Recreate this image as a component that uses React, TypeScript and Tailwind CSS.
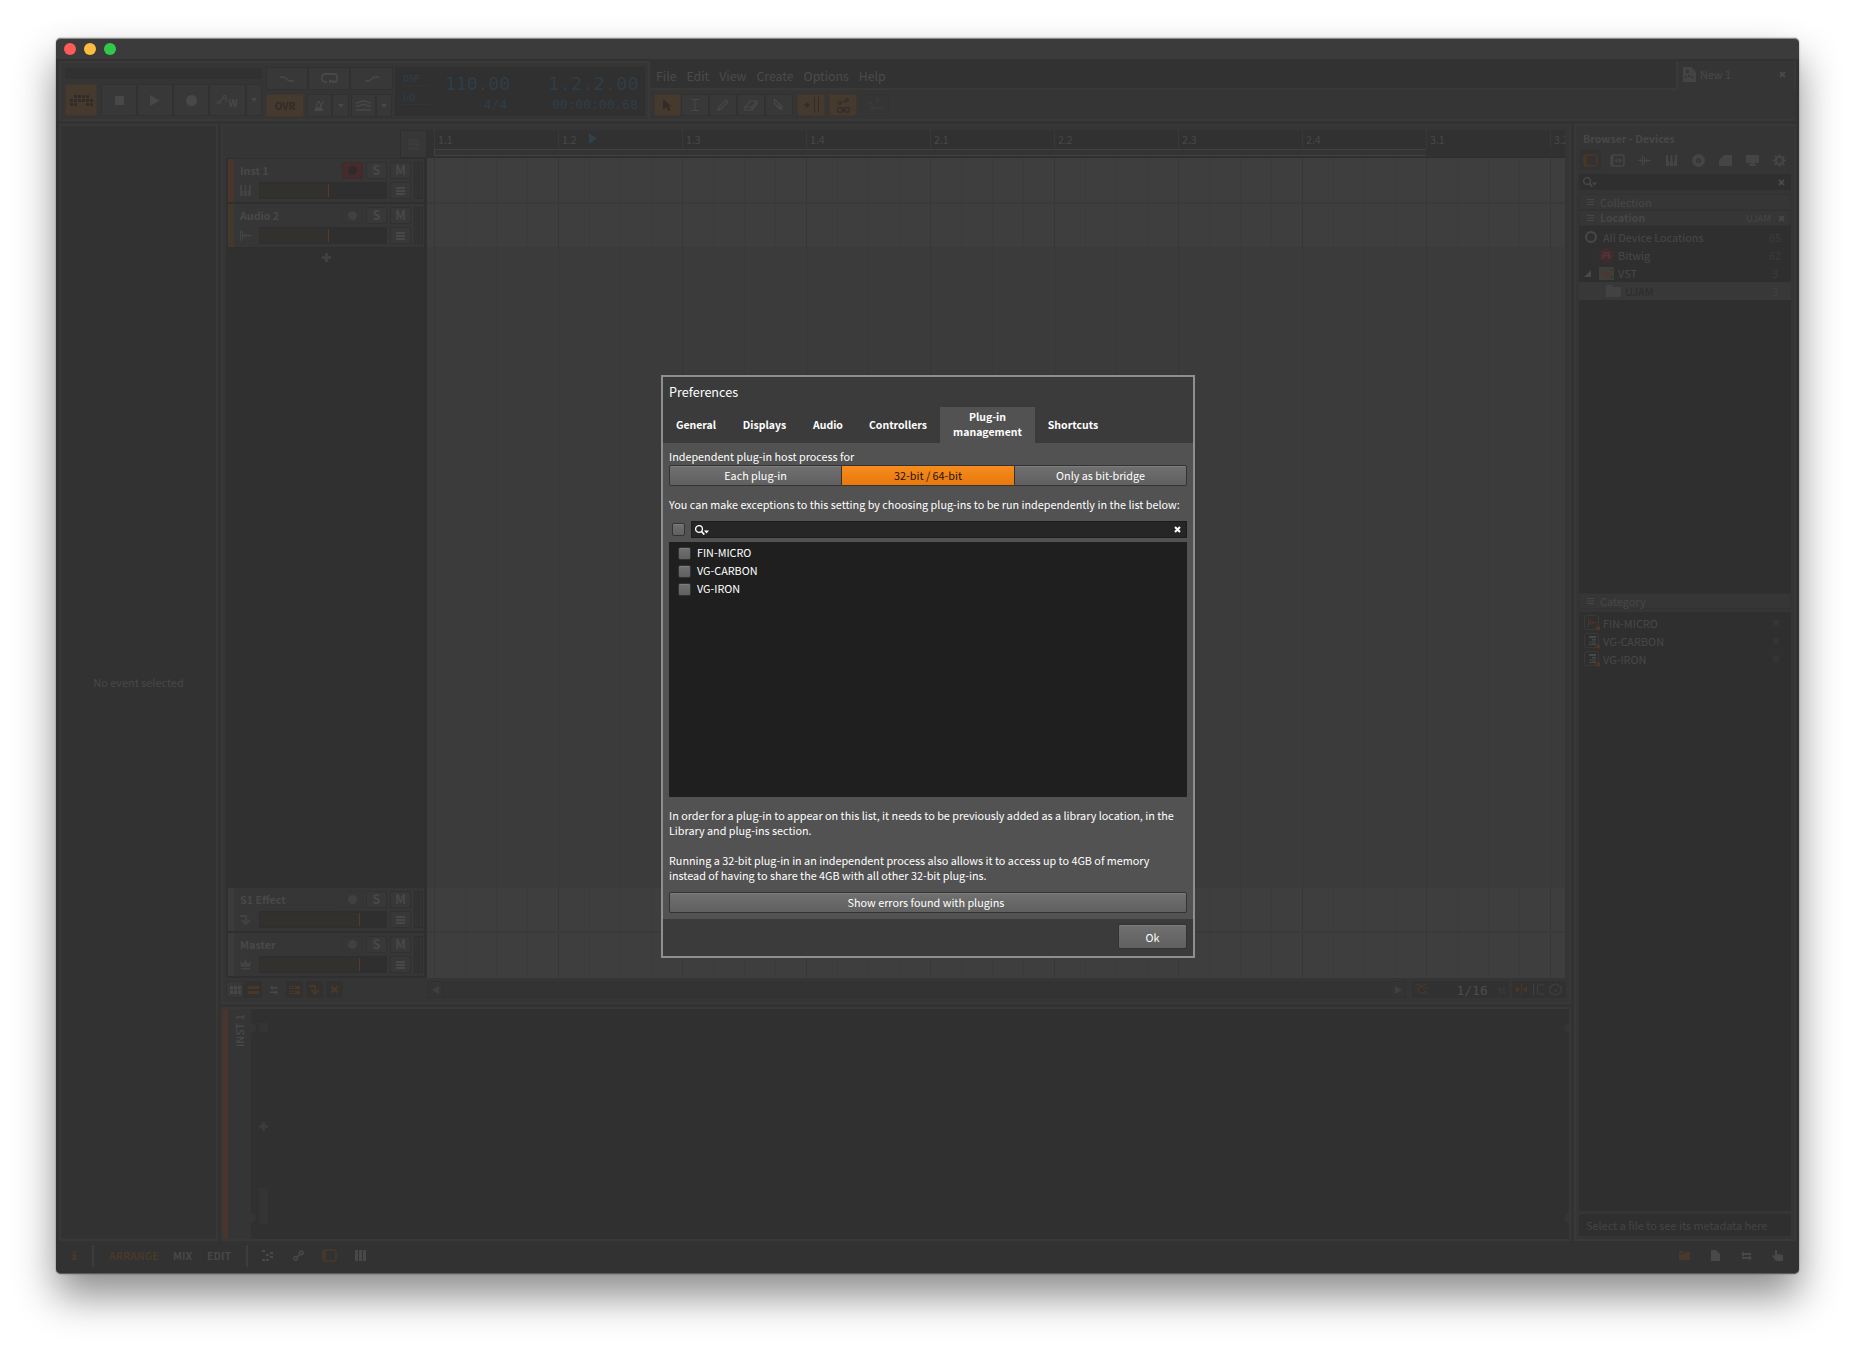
import type { ReactNode } from 'react';
import { clsx } from 'clsx';
import { twMerge } from 'tailwind-merge';

const BEATS = ['1.1', '1.2', '1.3', '1.4', '2.1', '2.2', '2.3', '2.4', '3.1', '3.2'];
const MENU = ['File', 'Edit', 'View', 'Create', 'Options', 'Help'];

interface IconProps {
  w: number;
  h: number;
  children: ReactNode;
  className?: string;
}

// filled icon on a pixel grid; strokes are opted into per shape
const Icon = ({ w, h, children, className }: IconProps) => (
  <svg width={w} height={h} viewBox={`0 0 ${w} ${h}`} fill="currentColor" className={clsx('block shrink-0', className)}>
    {children}
  </svg>
);

const line = { fill: 'none', stroke: 'currentColor', strokeWidth: 1.5 };

const CaretIcon = () => (
  <Icon w={6} h={4}><path d="M0 0h6L3 4z" /></Icon>
);

const CloseIcon = ({ size = 7 }: { size?: number }) => (
  <svg width={size} height={size} viewBox="0 0 7 7" className="block shrink-0">
    <path d="M1 1l5 5M6 1L1 6" stroke="currentColor" strokeWidth="2" />
  </svg>
);

const PlusIcon = () => (
  <Icon w={9} h={9}><path d="M3 0h3v3h3v3H6v3H3V6H0V3h3z" /></Icon>
);

const SearchIcon = () => (
  <Icon w={14} h={10}>
    <circle cx="4" cy="4" r="3.400" {...line} strokeWidth={1.300} />
    <path d="M6.500 6.500L9.300 9.500" {...line} strokeWidth={1.800} />
    <path d="M9 5.500h5L11.500 8.500z" />
  </Icon>
);

const RowsIcon = () => (
  <Icon w={9} h={8}><path d="M0 0h9v2H0zM0 3h9v2H0zM0 6h9v2H0z" /></Icon>
);

const ListIcon = () => (
  <Icon w={7} h={6}><path d="M0 0h7v1H0zM0 2.500h7v1H0zM0 5h7v1H0z" /></Icon>
);

const DotIcon = ({ size = 10 }: { size?: number }) => (
  <svg width={size} height={size} viewBox="0 0 10 10" className="block shrink-0"><circle cx="5" cy="5" r="5" fill="currentColor" /></svg>
);

const KeysIcon = () => (
  <Icon w={11} h={11}><path d="M0 0h2v6h1v5H0zM4.600 0h1.800v6h.8v5H3.800V6h.8zM9 0h2v11H8V6h1z" /></Icon>
);

const WaveIcon = () => (
  <Icon w={13} h={11}>
    <path d="M.5 0v11M2.500 1v9M4.500 3v5M6.500 4v3M8.500 4.500v2M0 5.500h12" {...line} strokeWidth={1} />
  </Icon>
);

const EffectIcon = () => (
  <Icon w={11} h={10}>
    <path d="M0 1h6v7" {...line} strokeWidth={1.800} />
    <path d="M2 5l4 4 4-4" {...line} strokeWidth={1.800} />
  </Icon>
);

const CrownIcon = () => (
  <Icon w={11} h={11}><path d="M0 2l3 2.500L5.500 0 8 4.500 11 2l-1 6H1zM1 9h9v1.500H1z" /></Icon>
);

const SwapIcon = () => (
  <Icon w={11} h={10}><path d="M3 0v2h7v2H3v2L0 3zM8 4v2H1v2h7v2l3-3z" /></Icon>
);

const PanelIcon = () => (
  <Icon w={15} h={13}>
    <rect x="1" y="1" width="13" height="11" rx="2" {...line} />
    <path d="M1 1h3v11H1z" opacity=".8" />
  </Icon>
);

const BitwigIcon = () => (
  <Icon w={23} h={11}>
    {[4, 8, 12, 16].map((x) => <rect key={x} x={x} y={0} width={3} height={3} />)}
    {[0, 4, 8, 12, 16, 20].map((x) => <rect key={x} x={x} y={4} width={3} height={3} />)}
    {[0, 4, 16, 20].map((x) => <rect key={x} x={x} y={8} width={3} height={3} />)}
  </Icon>
);

const AutomationIcon = () => (
  <Icon w={11} h={10}>
    <circle cx="2" cy="7.500" r="1.500" {...line} strokeWidth={1.200} />
    <circle cx="7.500" cy="2" r="1.500" {...line} strokeWidth={1.200} />
    <path d="M3 6.500l3.500-3.500M8.500 3l1 4" {...line} strokeWidth={1.200} />
  </Icon>
);

interface CellProps {
  children?: ReactNode;
  className?: string;
  on?: boolean;
}

const Cell = ({ children, className, on }: CellProps) => (
  <div
    className={twMerge(
      'flex shrink-0 items-center justify-center rounded-[2px] border',
      on ? 'border-[#40352c] bg-[#46392e] text-[#312c28]' : 'border-[#313131] bg-[#383838] text-[#484848]',
      className,
    )}
  >
    {children}
  </div>
);

const Toolbar = () => (
  <div className="flex h-[60px]">
    <div className="flex w-[591px] border-2 border-[#393939] bg-[#353535] pl-1">
      <div className="flex w-[197px] flex-col pt-[5px]">
        <div className="h-[11px] bg-[#313131]" />
        <div className="mt-[5px] flex h-[32px]">
          <Cell on className="mr-1 w-[32px]"><BitwigIcon /></Cell>
          <Cell className="w-[36px]"><div className="h-[9px] w-[9px] bg-[#484848]" /></Cell>
          <Cell className="w-[36px]"><Icon w={10} h={11}><path d="M0 0l10 5.500L0 11z" /></Icon></Cell>
          <Cell className="w-[36px]"><DotIcon size={11} /></Cell>
          <Cell className="w-[37px]">
            <AutomationIcon />
            <span className="mt-[6px] text-[10px] leading-none font-bold">W</span>
          </Cell>
          <Cell className="w-[16px]"><CaretIcon /></Cell>
        </div>
      </div>
      <div className="ml-1 flex w-[127px] flex-col gap-1 pt-1">
        <div className="flex h-[23px]">
          <Cell className="w-[42px]"><Icon w={14} h={6}><path d="M0 1h3c3 0 4 4 7 4h4" {...line} /></Icon></Cell>
          <Cell className="w-[42px]">
            <Icon w={17} h={11}>
              <path d="M6 9H4a3 3 0 01-3-3V4a3 3 0 013-3h9a3 3 0 013 3v2a3 3 0 01-3 3h-2" {...line} strokeWidth={1.800} />
              <path d="M8 11l5-4H8z" />
            </Icon>
          </Cell>
          <Cell className="w-[43px]"><Icon w={14} h={6}><path d="M0 5h3c3 0 4-4 7-4h4" {...line} /></Icon></Cell>
        </div>
        <div className="flex h-[23px]">
          <Cell on className="w-[38px] text-[10px] font-bold">OVR</Cell>
          <Cell className="ml-[3px] w-[25px]">
            <Icon w={11} h={11}>
              <path d="M1 10.500L4 1.500h1.500l3 9z" {...line} strokeWidth={1.200} />
              <path d="M2 7.500h5.500l1.500 3.500H1zM4.500 8L9.500 .5l1 .7L6 8z" />
            </Icon>
          </Cell>
          <Cell className="w-[17px]"><CaretIcon /></Cell>
          <Cell className="ml-[2px] w-[25px]">
            <Icon w={15} h={11}><path d="M0 3c4 0 4-2 7.500-2S11 3 15 3M0 6.500c4 0 4-2 7.500-2s3.500 2 7.500 2M0 10h15" {...line} /></Icon>
          </Cell>
          <Cell className="w-[16px]"><CaretIcon /></Cell>
        </div>
      </div>
      <div className="mt-1 ml-[2px] flex h-[49px] w-[250px] bg-[#303030] font-['DejaVu_Sans_Mono',monospace] text-[#2f3e48]">
        <div className="w-[34px] pt-1 pl-2 font-['Noto_Sans_CJK_SC',sans-serif] text-[8.500px] leading-[14px] font-medium">
          <div className="mb-1 w-[26px] border-b border-[#303539]">DSP</div>
          <div className="w-[26px] border-b border-[#303539]">I/O</div>
        </div>
        <div className="flex w-[81px] flex-col items-end pt-[5px]">
          <span className="text-[18px] leading-[24px]">110.00</span>
          <span className="pr-[3px] text-[13px] leading-[17px]">4/4</span>
        </div>
        <div className="flex w-[129px] flex-col items-end pt-[5px]">
          <span className="text-[18px] leading-[24px] tracking-[0.500px]">1.2.2.00</span>
          <span className="pr-px text-[13px] leading-[17px]">00:00:00.68</span>
        </div>
      </div>
    </div>
    <div className="flex flex-1 flex-col border-b-2 border-[#393939] bg-[#353535]">
      <div className="flex h-[29px]">
        <div className="flex w-[1026px] items-center gap-[10px] border-b-2 border-[#393939] bg-[#323232] pt-[3px] pl-[6px] text-[12.300px] text-[#4b4b4b]">
          {MENU.map((item) => <span key={item}>{item}</span>)}
        </div>
        <div className="flex flex-1 items-center border-x-2 border-[#393939] pr-[8px] pb-[2px] pl-[5px] text-[#494949]">
          <Icon w={13} h={15}>
            <path d="M0 0h8l5 5v10H0z" opacity=".8" />
            <path d="M3 3h3v3H3zM2 9h2v2H2zM5 8h2v2H5zM8 9h2v2H8z" fill="#353535" />
          </Icon>
          <span className="ml-1 flex-1 text-[10.800px]">New 1</span>
          <CloseIcon />
        </div>
      </div>
      <div className="mt-1 flex h-[22px] pl-1">
        <Cell on className="w-[27px]"><Icon w={9} h={12}><path d="M0 0l8.500 7.500H5.500L7.500 11l-2 1L3.500 8 0 10.500z" /></Icon></Cell>
        <Cell className="w-[28px]"><Icon w={8} h={12}><path d="M0 .5h8M0 11.500h8M4 .5v11" {...line} strokeWidth={1} /></Icon></Cell>
        <Cell className="w-[28px]"><Icon w={12} h={12}><path d="M1 11l1-3 7-7 2 2-7 7z" {...line} strokeWidth={1.200} /></Icon></Cell>
        <Cell className="w-[28px]"><Icon w={14} h={12}><path d="M1 8l5-6h7L8 8zM1 8v3h7l5-6V2M8 8v3" {...line} strokeWidth={1.200} /></Icon></Cell>
        <Cell className="w-[28px]"><Icon w={10} h={12}><path d="M.5 .5v4l5.500 6 2.500-2.500z" {...line} strokeWidth={1.200} /><path d="M3 4l6 7-3-.5z" /></Icon></Cell>
        <Cell on className="ml-1 w-[28px]">
          <Icon w={16} h={16}>
            <path d="M0 7.500h3V5l4 3-4 3V8.500H0z" />
            <path d="M11.500 0v16M15.500 0v16" {...line} strokeWidth={1} />
          </Icon>
        </Cell>
        <Cell on className="ml-1 w-[28px]">
          <Icon w={13} h={15}>
            <circle cx="2.500" cy="5" r="1.500" {...line} strokeWidth={1} />
            <circle cx="10" cy="2" r="1.500" {...line} strokeWidth={1} />
            <path d="M4 4.500l1.500-1.500 1.500 1.500L8.500 3M4 12h5" {...line} strokeWidth={1} />
            <rect x=".6" y="9.600" width="5" height="4.500" rx="1" {...line} strokeWidth={1.200} />
            <rect x="7.400" y="9.600" width="5" height="4.500" rx="1" {...line} strokeWidth={1.200} />
          </Icon>
        </Cell>
        <Cell className="ml-1 w-[28px] opacity-30"><Icon w={16} h={12}><path d="M3 9l4-3v2h9v2H7v2zM1 3h4v2H1zM9 0h3v3H9z" /></Icon></Cell>
      </div>
    </div>
  </div>
);

interface Track {
  name: string;
  strip: string;
  icon: ReactNode;
  armed?: boolean;
  level: string;
}

const TRACKS: Track[] = [
  { name: 'Inst 1', strip: 'bg-[#49352b]', icon: <KeysIcon />, armed: true, level: 'w-[69px]' },
  { name: 'Audio 2', strip: 'bg-[#41392c]', icon: <WaveIcon />, level: 'w-[69px]' },
];
const MASTERS: Track[] = [
  { name: 'S1 Effect', strip: 'bg-[#3b3b3b]', icon: <EffectIcon />, level: 'w-[100px]' },
  { name: 'Master', strip: 'bg-[#3b3b3b]', icon: <CrownIcon />, level: 'w-[100px]' },
];

const TrackHeader = ({ track }: { track: Track }) => (
  <div className="flex h-[45px] border-b-2 border-[#2f2f2f] bg-[#363636]">
    <div className={clsx('w-[6px]', track.strip)} />
    <div className="flex w-[177px] flex-col pt-[3px] pl-[6px]">
      <div className="flex h-[17px] items-center">
        <span className="flex-1 text-[10.700px] leading-[17px] font-bold text-[#494949]">{track.name}</span>
        <Cell className={clsx('h-[17px] w-[21px]', track.armed ? 'border-[#3a2c2c] bg-[#452b2b] text-[#302a2a]' : 'border-[#343434] bg-[#363636] text-[#414141]')}>
          <DotIcon size={9} />
        </Cell>
        <Cell className="ml-[3px] h-[17px] w-[21px] text-[12.500px] leading-none font-bold">S</Cell>
        <Cell className="ml-[3px] h-[17px] w-[21px] text-[12.500px] leading-none font-bold">M</Cell>
      </div>
      <div className="mt-[3px] flex h-[17px] items-center text-[#434343]">
        <div className="w-[19px]">{track.icon}</div>
        <div className="flex h-[17px] w-[128px] bg-[#2f2f2f] p-px py-[2px]">
          <div className={clsx('border-r border-[#573a2a] bg-[#33312d]', track.level)} />
        </div>
        <Cell className="ml-[3px] h-[17px] w-[21px]"><RowsIcon /></Cell>
      </div>
    </div>
    <div className="my-[3px] ml-[3px] flex w-[9px] border border-[#2f2f2f] bg-[#333]">
      <div className="w-[4px] border-r border-[#2f2f2f]" />
    </div>
  </div>
);

const GridRow = ({ className, dense }: { className: string; dense?: boolean }) => (
  <div className={clsx('flex w-[1138px] shrink-0 overflow-hidden', className)}>
    <div className="w-[7px] shrink-0" />
    {BEATS.map((beat) => (
      <div key={beat} className="flex w-[124px] shrink-0 border-l border-[#373737]">
        {[0, 1, 2].map((i) => (
          <div key={i} className={clsx('w-[31px] border-r', dense ? 'border-[#3b3b3b]' : i === 1 ? 'border-[#393939]' : 'border-transparent')} />
        ))}
      </div>
    ))}
  </div>
);

const Ruler = () => (
  <div className="flex h-[28px] w-[1138px] overflow-hidden border-b border-[#2e2e2e] bg-[#313131] pl-[7px]">
    {BEATS.map((beat, i) => (
      <div key={beat} className="flex w-[124px] shrink-0 flex-col">
        <div className="flex h-[19px] border-l border-[#383838] pt-px pl-[3px] text-[10.600px] leading-[17px] text-[#484848]">
          {beat}
          {i === 1 && <Icon w={8} h={11} className="mt-[2px] ml-[12px] text-[#2f414b]"><path d="M0 0l8 5.500L0 11z" /></Icon>}
        </div>
        <div className={clsx('h-[7px] border-[#414141]', i < 8 && 'border-y bg-[#343434]', i === 0 && 'border-l')} />
      </div>
    ))}
  </div>
);

const ArrangeFooter = () => (
  <div className="mt-[3px] flex h-[17px] items-center text-[#4a4a4a]">
    <Cell className="h-[17px] w-[18px]"><Icon w={11} h={8}><path d="M0 0h3v3.500H0zM4 0h3v3.500H4zM8 0h3v3.500H8zM0 4.500h3V8H0zM4 4.500h3V8H4zM8 4.500h3V8H8z" /></Icon></Cell>
    <Cell className="h-[17px] w-[18px] bg-[#313131] text-[#4a3726]"><Icon w={11} h={8}><path d="M0 0h11v3H0zM0 5h11v3H0z" /></Icon></Cell>
    <Cell className="ml-1 h-[17px] w-[16px] border-transparent bg-transparent"><Icon w={8} h={10}><path d="M2.500 0v2H8v1.500H2.500v2L0 2.700zM5.500 4.500v2H0V8h5.500v2L8 7.200z" /></Icon></Cell>
    <Cell className="ml-1 h-[17px] w-[17px] bg-[#313131] text-[#4a3726]"><Icon w={11} h={8}><path d="M0 0h5v1H0zM0 2h5v1H0zM0 5h5v1H0zM0 7h5v1H0zM6 0h5v3H6zM6 5h5v3H6z" /></Icon></Cell>
    <Cell className="ml-[3px] h-[17px] w-[17px] bg-[#313131] text-[#4a3726]"><EffectIcon /></Cell>
    <Cell className="ml-[3px] h-[17px] w-[17px] bg-[#313131] text-[#4a3726]"><CloseIcon size={9} /></Cell>
    <Cell className="ml-[84px] h-[17px] w-[16px] bg-[#343434] text-[#404040]"><Icon w={7} h={8}><path d="M7 0v8L0 4z" /></Icon></Cell>
    <div className="h-[17px] flex-1 border border-[#323232] bg-[#333]" />
    <Cell className="h-[17px] w-[16px] bg-[#343434] text-[#404040]"><Icon w={7} h={8}><path d="M0 0v8l7-4z" /></Icon></Cell>
    <div className="ml-[6px] flex h-[17px] w-[97px] items-center bg-[#313131] pr-[3px] pl-[3px]">
      <Icon w={13} h={12} className="text-[#4a3726]">
        <rect x=".5" y=".5" width="5" height="3.500" rx="1.500" {...line} strokeWidth={1} />
        <rect x="7" y=".5" width="5" height="3.500" rx="1.500" {...line} strokeWidth={1} />
        <path d="M3 4.500a4 4 0 007 3l2 3.500M4 2.500h4" {...line} />
      </Icon>
      <span className="ml-auto pt-[2px] font-['DejaVu_Sans_Mono',monospace] text-[13px] leading-none text-[#4d4d4d]">1/16</span>
      <span className="ml-[10px] text-[10px] leading-none text-[#3c3c3c]">st</span>
    </div>
    <div className="mr-[3px] ml-[3px] flex h-[17px] w-[54px] items-center justify-between bg-[#313131] px-1 text-[#404040]">
      <Icon w={11} h={11} className="text-[#4a3726]"><path d="M0 2l4 3.500L0 9zM11 2L7 5.500 11 9zM5 0h1v11H5z" /></Icon>
      <Icon w={11} h={11}><path d="M.5 0v11M11 1H4.500v9H11" {...line} strokeWidth={1} /></Icon>
      <Icon w={13} h={13}><path d="M6.500 .8l5.500 2.700v6L6.500 12.200 1 9.500v-6zM6.500 6v3" {...line} strokeWidth={1.200} /></Icon>
    </div>
  </div>
);

const Arranger = () => (
  <div className="h-[880px] border-2 border-[#383838] bg-[#353535] pt-1 pl-[3px]">
    <div className="flex h-[28px]">
      <div className="flex w-[201px] justify-end">
        <div className="flex w-[27px] items-center justify-center border border-[#2f2f2f] bg-[#373737] text-[#3b3b3b]">
          <Icon w={11} h={13}><path d="M0 1h11v3H0zM0 5h11v3H0zM0 9h11v3H0z" /></Icon>
        </div>
      </div>
      <Ruler />
    </div>
    <div className="flex h-[820px]">
      <div className="flex w-[201px] flex-col overflow-hidden border border-r-[3px] border-b-0 border-[#2f2f2f] bg-[#303030] pl-px">
        {TRACKS.map((track) => <TrackHeader key={track.name} track={track} />)}
        <div className="flex flex-1 justify-center pt-[4px] pl-px text-[#3f3f3f]"><PlusIcon /></div>
        {MASTERS.map((track) => <TrackHeader key={track.name} track={track} />)}
      </div>
      <div className="flex w-[1138px] flex-col">
        <GridRow dense className="h-[46px] border-b-2 border-[#3a3a3a] bg-[#3e3e3e]" />
        <GridRow dense className="h-[43px] bg-[#3e3e3e]" />
        <GridRow className="h-[641px] bg-[#3b3b3b]" />
        <GridRow dense className="h-[45px] border-b-2 border-[#3a3a3a] bg-[#3e3e3e]" />
        <GridRow dense className="h-[45px] bg-[#3e3e3e]" />
      </div>
    </div>
    <ArrangeFooter />
  </div>
);

const DevicePanel = () => (
  <div className="flex h-[234px] border-2 border-[#383838] bg-[#303030]">
    <div className="w-[5px] bg-[#49352b]" />
    <div className="flex w-[23px] justify-center bg-[#353535] pt-[2px] pr-[2px]">
      <span className="h-[36px] rotate-180 text-[10.800px] leading-[20px] font-medium whitespace-nowrap text-[#494949] [writing-mode:vertical-rl]">INST 1</span>
    </div>
    <div className="flex flex-1 justify-between overflow-hidden">
      <div className="-ml-[5px] flex flex-col justify-between pt-[14px] pb-[16px] text-[#353535]">
        <DotIcon />
        <DotIcon />
      </div>
      <div className="mr-auto ml-[3px] flex w-[9px] flex-col pt-[14px] text-[#3b3b3b]">
        <div className="h-[9px] w-[9px] bg-[#343434]" />
        <div className="mt-[90px]"><PlusIcon /></div>
        <div className="mt-[57px] h-[36px] w-[9px] bg-[#343434]" />
      </div>
      <div className="-mr-[5px] flex flex-col justify-between pt-[14px] pb-[16px] text-[#353535]">
        <DotIcon />
        <DotIcon />
      </div>
    </div>
  </div>
);

const BROWSER_TABS: ReactNode[] = [
  <span className="text-[#4a3726]"><PanelIcon /></span>,
  <Icon w={15} h={13}><rect x="1" y="1" width="13" height="11" rx="2" {...line} /><path d="M1 1h2.500v11H1zM7.500 4v5L4.500 6.500zM9 4v5l3-2.500z" /></Icon>,
  <Icon w={13} h={11}><path d="M0 5.500h13M2.500 4v3M4.500 0v11M6.500 2v7M8.500 3.500v4M10.500 4.500v2" {...line} strokeWidth={1} /></Icon>,
  <KeysIcon />,
  <Icon w={13} h={13}><path fillRule="evenodd" d="M6.500 0a6.500 6.500 0 110 13 6.500 6.500 0 010-13zm0 4a2.500 2.500 0 100 5 2.500 2.500 0 000-5z" /><circle cx="6.500" cy="6.500" r="1" /></Icon>,
  <Icon w={13} h={11}><path d="M5 0h8v11H0V5z" /></Icon>,
  <Icon w={13} h={11}><path d="M0 0h13v8H0zM5 8h3v1h2v2H3V9h2z" /></Icon>,
  <Icon w={13} h={13}>
    <circle cx="6.500" cy="6.500" r="3.600" {...line} strokeWidth={2.400} />
    <path d="M6.500 0v2.500M6.500 10.500V13M0 6.500h2.500M10.500 6.500H13M1.900 1.900l1.800 1.800M9.300 9.300l1.800 1.800M11.100 1.900L9.300 3.700M3.700 9.300l-1.800 1.800" {...line} strokeWidth={2} />
  </Icon>,
];

const LOCATIONS = [
  {
    name: 'All Device Locations', count: 65, pad: 'pl-[6px]', selected: false,
    icon: <Icon w={12} h={12}><circle cx="6" cy="6" r="5" {...line} strokeWidth={2} /></Icon>,
  },
  {
    name: 'Bitwig', count: 62, pad: 'pl-[20px]', selected: false,
    icon: (
      <Icon w={15} h={15}>
        <circle cx="7.500" cy="7.500" r="7.500" fill="#432b2d" />
        <path d="M4.500 5h6M3 7.500h9M3 9.500h3M9 9.500h3" stroke="#524042" strokeWidth="1.500" strokeDasharray="1 .5" />
      </Icon>
    ),
  },
  {
    name: 'VST', count: 3, pad: 'pl-[5px]', selected: false,
    icon: (
      <>
        <Icon w={7} h={7} className="mr-2"><path d="M7 0v7H0z" /></Icon>
        <Icon w={15} h={13}>
          <path d="M0 0h15v13H0z" fill="#3e4038" />
          <path d="M1 6.500h2l3-2.500h3v5H6L3 6.500M9 5.500h2M9 7.500h2" stroke="#4b3632" fill="#4b3632" />
          <path d="M12 2h2v2h-2zM12 9h2v2h-2z" fill="#35372f" />
        </Icon>
      </>
    ),
  },
  {
    name: 'UJAM', count: 3, pad: 'pl-[27px]', selected: true,
    icon: <Icon w={15} h={12} className="text-[#424242]"><path d="M0 0h6l1.500 2H15v10H0z" /></Icon>,
  },
];

const PLUGINS = ['FIN-MICRO', 'VG-CARBON', 'VG-IRON'];

const SectionHead = ({ name, bold, filter }: { name: string; bold?: boolean; filter?: string }) => (
  <div className="flex h-4 items-center border border-[#323232] bg-[#363636] pr-[5px] pl-[7px] text-[#474747]">
    <ListIcon />
    <span className={clsx('ml-[6px] flex-1 leading-4', bold ? 'text-[10.600px] font-bold' : 'text-[10.900px]')}>{name}</span>
    {filter && <span className="mr-[7px] text-[9.500px] leading-4">{filter}</span>}
    {filter && <CloseIcon />}
  </div>
);

const Browser = () => (
  <div className="flex w-[222px] flex-col border-2 border-[#393939] bg-[#353535] px-[3px] pb-[3px]">
    <div className="mt-[5px] ml-1 text-[10.600px] leading-[16px] font-bold text-[#484848]">Browser - Devices</div>
    <div className="mt-[3px] flex h-[20px] items-center pl-px text-[#454545]">
      {BROWSER_TABS.map((tab, i) => (
        <div key={i} className={clsx('flex h-[20px] w-[21px] shrink-0 items-center justify-center', i > 0 ? 'ml-[6px]' : 'bg-[#323232]')}>{tab}</div>
      ))}
    </div>
    <div className="mt-[4px] flex h-[16px] items-center justify-between bg-[#2f2f2f] pr-[6px] pl-1 text-[#494949]">
      <SearchIcon />
      <CloseIcon />
    </div>
    <div className="mt-1"><SectionHead name="Collection" /></div>
    <SectionHead name="Location" bold filter="UJAM" />
    <div className="h-[367px] bg-[#2f2f2f] pt-[2px] text-[10.900px] leading-[18px] text-[#484848]">
      {LOCATIONS.map(({ name, count, pad, selected, icon }) => (
        <div key={name} className={clsx('flex h-[18px] items-center pr-[10px]', pad, selected && 'bg-[#383838]')}>
          {icon}
          <span className={clsx('flex-1', name === 'All Device Locations' ? 'ml-[6px]' : 'ml-1', selected && 'text-[#2c2c2c]')}>{name}</span>
          <span className={clsx(selected ? 'text-[#424242]' : 'text-[#3b3b3b]', count < 10 && 'pr-[3px]')}>{count}</span>
        </div>
      ))}
    </div>
    <SectionHead name="Category" />
    <div className="mt-[3px] flex-1 bg-[#2f2f2f] pt-[2px] text-[10.900px] text-[#484848]">
      {PLUGINS.map((name, i) => (
        <div key={name} className="flex h-[18px] items-center pr-[10px] pl-[5px]">
          <Icon w={17} h={16}>
            <rect x=".5" y=".5" width="14" height="14" rx="2" {...line} strokeWidth={1} opacity=".4" />
            {i === 0
              ? <path d="M4.500 3v9M6.500 5v5M8.500 6v3M4 7.500h9" stroke="#4b332b" />
              : <path d="M5 3h7v2H5zM8 6h4v1.500H8zM5 8.500h7v1H5zM8 10.500h4V12H5v-1h3z" />}
            <path d="M8 13.500h3l2-2h3v4h-3l-2-2" fill="#4f352a" />
          </Icon>
          <span className="ml-[2px] flex-1 leading-[18px]">{name}</span>
          <Icon w={10} h={10} className="mb-[2px] text-[#38362f]"><path d="M5 0l1.200 3.700H10L7 6l1.100 4L5 7.600 1.900 10 3 6 0 3.700h3.800z" /></Icon>
        </div>
      ))}
    </div>
    <div className="mt-[3px] flex h-[22px] items-center bg-[#2f2f2f] pl-[7px] text-[10.900px] text-[#444]">Select a file to see its metadata here</div>
  </div>
);

const Footer = () => (
  <div className="flex h-[31px] items-center pb-[2px] text-[10.500px] font-bold text-[#484848]">
    <Icon w={5} h={9} className="ml-[13px] text-[#4a3828]"><path d="M1.500 0h2v2h-2zM0 3h3.700v4.500H5V9H0V7.500h1.200v-3H0z" /></Icon>
    <div className="ml-[15px] h-[22px] w-[2px] bg-[#3d3d3d]" />
    <span className="ml-[15px] w-[64px] text-[#4a3828]">ARRANGE</span>
    <span className="w-[34px]">MIX</span>
    <span className="w-[39px]">EDIT</span>
    <div className="h-[22px] w-[2px] bg-[#3d3d3d]" />
    <Icon w={11} h={11} className="ml-[14px]"><path d="M0 0h3v2H0zM4 4h3v2H4zM8 2h3v2H8zM8 6h3v2H8zM0 9h3v2H0zM4 9h3v2H4z" /></Icon>
    <Icon w={11} h={11} className="ml-[20px]">
      <circle cx="2.700" cy="8.300" r="1.800" {...line} />
      <circle cx="8.300" cy="2.700" r="1.800" {...line} />
      <path d="M4 7l3-3" {...line} />
    </Icon>
    <span className="ml-[18px] text-[#4a3828]"><PanelIcon /></span>
    <Icon w={11} h={11} className="mr-auto ml-[18px]"><path d="M0 0h3v11H0zM4 0h3v11H4zM8 0h3v11H8z" /></Icon>
    <Icon w={11} h={9} className="text-[#483a2b]"><path d="M0 0h4v2H0zM5 1h6v8H0V3h5z" /></Icon>
    <Icon w={9} h={11} className="ml-[21px]"><path d="M0 0h5l4 4v7H0z" /></Icon>
    <span className="ml-[21px]"><SwapIcon /></span>
    <Icon w={11} h={11} className="mr-[13px] ml-[20px]"><path d="M3 0h2v4l6 1v6H4L0 6l1-1 2 1z" /></Icon>
  </div>
);

const DIALOG_TABS = [
  { name: 'General', width: 'w-[66px]' },
  { name: 'Displays', width: 'w-[71px]' },
  { name: 'Audio', width: 'w-[56px]' },
  { name: 'Controllers', width: 'w-[84px]' },
  { name: 'Plug-in management', width: 'w-[95px]' },
  { name: 'Shortcuts', width: 'w-[76px]' },
];

const RAISED = 'border border-[#333] bg-linear-to-b from-[#707070] to-[#606060] shadow-[inset_0_1px_0_#7d7d7d]';

const Checkbox = () => <div className={clsx('h-[13px] w-[13px] shrink-0 rounded-[2px]', RAISED)} />;

const PreferencesDialog = () => (
  <div className="absolute top-[337px] left-[605px] flex h-[583px] w-[534px] flex-col border-2 border-[#8f8f8f] bg-[#525252] text-[10.800px] leading-[15px] whitespace-nowrap text-white">
    <div className="h-[66px] bg-[#3b3b3b]">
      <div className="h-[30px] pt-[5px] pl-[6px] text-[12.600px] leading-[20px]">Preferences</div>
      <div className="flex h-[36px] text-[10.500px] font-bold">
        {DIALOG_TABS.map(({ name, width }, i) => (
          <div key={name} className={clsx('flex items-center justify-center pb-[2px] text-center whitespace-normal', width, i === 4 && 'bg-[#525252]')}>
            {name}
          </div>
        ))}
      </div>
    </div>
    <div className="px-[6px]">
      <div className="mt-[6px] h-[16px]">Independent plug-in host process for</div>
      <div className="flex h-[21px] w-[518px] text-center leading-[19px]">
        <div className={clsx('w-[173px] rounded-l-[2px]', RAISED)}>Each plug-in</div>
        <div className="w-[172px] border-y border-[#333] bg-linear-to-b from-[#f78b1c] to-[#e87a0c] text-[#1d1208]">32-bit / 64-bit</div>
        <div className={clsx('w-[173px] rounded-r-[2px]', RAISED)}>Only as bit-bridge</div>
      </div>
      <div className="mt-[11px] h-[15px]">
        You can make exceptions to this setting by choosing plug-ins to be run independently in the list below:
      </div>
      <div className="mt-[9px] flex h-[17px] w-[518px] items-center pl-[3px]">
        <Checkbox />
        <div className="ml-[6px] flex h-[17px] flex-1 items-center justify-between border border-[#1c1c1c] bg-[#262626] pr-[5px] pl-[3px]">
          <SearchIcon />
          <CloseIcon />
        </div>
      </div>
      <div className="mt-1 h-[255px] w-[518px] bg-[#1f1f1f] pt-[2px]">
        {PLUGINS.map((name) => (
          <div key={name} className="flex h-[18px] items-center gap-[6px] pl-[9px]">
            <Checkbox />
            <span className="pb-px">{name}</span>
          </div>
        ))}
      </div>
      <p className="mt-[11px]">
        In order for a plug-in to appear on this list, it needs to be previously added as a library location, in the
        <br />
        Library and plug-ins section.
      </p>
      <p className="mt-[15px] leading-[14.500px]">
        Running a 32-bit plug-in in an independent process also allows it to access up to 4GB of memory
        <br />
        instead of having to share the 4GB with all other 32-bit plug-ins.
      </p>
      <div className={clsx('mt-[10px] h-[21px] w-[518px] rounded-[2px] pr-[4px] text-center leading-[19px]', RAISED)}>Show errors found with plugins</div>
    </div>
    <div className="mt-auto flex h-[37px] shrink-0 justify-end bg-[#3b3b3b] pt-[5px] pr-[6px]">
      <div className={clsx('h-[25px] w-[69px] rounded-[2px] text-center leading-[24px]', RAISED)}>Ok</div>
    </div>
  </div>
);

export default function App() {
  return (
    <div className="h-[1348px] w-[1855px] overflow-hidden bg-white pt-[38px] pl-[56px] font-['Noto_Sans_CJK_SC',sans-serif]">
      <div className="relative h-[1236px] w-[1743px] rounded-[5px] border-b border-[#5a5a5a] bg-[#323232] shadow-[0_22px_40px_rgba(0,0,0,0.45),0_0_2px_rgba(0,0,0,0.4)]">
        <div className="flex h-[21px] items-center gap-2 rounded-t-[5px] border-t border-[#8a8a8a] bg-[#3b3b3b] pl-2">
          <div className="h-3 w-3 rounded-full bg-[#fc5b57]" />
          <div className="h-3 w-3 rounded-full bg-[#fdbc40]" />
          <div className="h-3 w-3 rounded-full bg-[#34c84a]" />
        </div>
        <div className="flex flex-col px-[3px] pt-[2px]">
          <Toolbar />
          <div className="mt-[3px] flex h-[1117px] gap-[3px]">
            <div className="flex w-[159px] items-center justify-center border-2 border-[#383838] bg-[#323232] text-[10.900px] text-[#484848]">
              No event selected
            </div>
            <div className="flex w-[1350px] flex-col gap-[3px]">
              <Arranger />
              <DevicePanel />
            </div>
            <Browser />
          </div>
          <Footer />
        </div>
        <PreferencesDialog />
      </div>
    </div>
  );
}
